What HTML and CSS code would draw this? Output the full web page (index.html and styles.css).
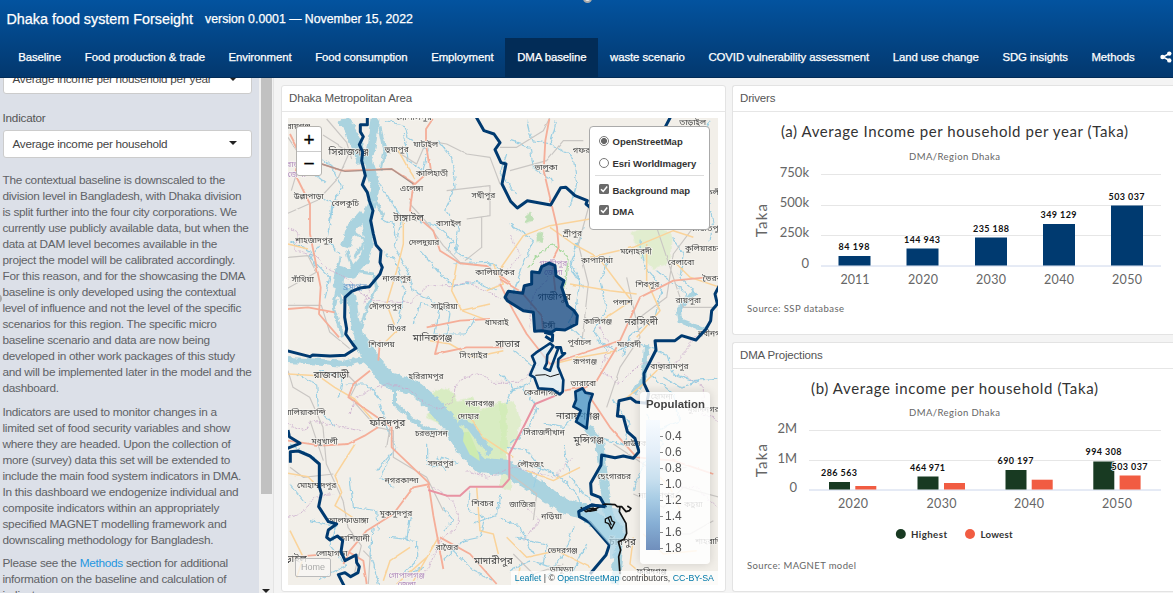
FILE: index.html
```html
<!DOCTYPE html>
<html lang="en">
<head>
<meta charset="utf-8">
<title>Dhaka food system Forseight</title>
<link rel="stylesheet" href="styles.css">
</head>
<body>
<header class="navbar">
  <span class="grip grip-top"></span>
  <div class="brand"><span class="brand-title">Dhaka food system Forseight</span><span class="brand-version">version 0.0001 — November 15, 2022</span></div>
  <nav class="tabs">
    <a>Baseline</a><a>Food production &amp; trade</a><a>Environment</a><a>Food consumption</a><a>Employment</a><a class="active">DMA baseline</a><a>waste scenario</a><a>COVID vulnerability assessment</a><a>Land use change</a><a>SDG insights</a><a>Methods</a>
    <svg class="share" viewBox="0 0 12 12"><path d="M9.500 2.500L3 6l6.500 3.500" fill="none" stroke="#fff" stroke-width="1.500"/><circle cx="9.300" cy="2.600" r="2.200"/><circle cx="2.500" cy="6" r="2.200"/><circle cx="9.300" cy="9.400" r="2.200"/></svg>
  </nav>
</header>
<div class="page">
  <aside class="sidebar">
    <span class="grip grip-left"></span>
    <div class="select select-cut"><span>Average income per household per year</span><i class="caret"></i></div>
    <div class="field-label">Indicator</div>
    <div class="select"><span>Average income per household</span><i class="caret"></i></div>
    <p class="first">The contextual baseline is downscaled to the<br>division level in Bangladesh, with Dhaka division<br>is split further into the four city corporations. We<br>currently use publicly available data, but when the<br>data at DAM level becomes available in the<br>project the model will be calibrated accordingly.<br>For this reason, and for the showcasing the DMA<br>baseline is only developed using the contextual<br>level of influence and not the level of the specific<br>scenarios for this region. The specific micro<br>baseline scenario and data are now being<br>developed in other work packages of this study<br>and will be implemented later in the model and the<br>dashboard.</p>
    <p>Indicators are used to monitor changes in a<br>limited set of food security variables and show<br>where they are headed. Upon the collection of<br>more (survey) data this set will be extended to<br>include the main food system indicators in DMA.<br>In this dashboard we endogenize individual and<br>composite indicators within an appropriately<br>specified MAGNET modelling framework and<br>downscaling methodology for Bangladesh.</p>
    <p>Please see the <a class="link">Methods</a> section for additional<br>information on the baseline and calculation of<br>indicators.</p>
  </aside>
  <div class="scrollbar"><div class="thumb"></div><i class="caret"></i></div>
  <main class="main">
    <section class="card map-card">
      <h2>Dhaka Metropolitan Area</h2>
      <div class="map">
        <svg class="tiles" viewBox="24 102 1290 1401" preserveAspectRatio="none">
          <defs>
            <filter id="wiggle" x="-5%" y="-5%" width="110%" height="110%"><feTurbulence type="fractalNoise" baseFrequency="0.055" numOctaves="3" seed="4"/><feDisplacementMap in="SourceGraphic" scale="16" xChannelSelector="R" yChannelSelector="G"/></filter>
            <filter id="bend" x="-5%" y="-5%" width="110%" height="110%"><feTurbulence type="fractalNoise" baseFrequency="0.03" numOctaves="2" seed="9"/><feDisplacementMap in="SourceGraphic" scale="6" xChannelSelector="R" yChannelSelector="G"/></filter>
          </defs>
          <rect x="0" y="80" width="1340" height="1450" fill="#f2efe9"/>
          <!-- vegetation -->
          <g fill="#cdebb0" filter="url(#wiggle)">
            <path d="M480 910l35 10 15 30 50-10 20 40 60-25 20 5v180l-60-10-50-50-70-50-60-30 40-50-30-20z" opacity=".7"/>
            <path d="M660 960l40-10 20 60-10 60-50 40zM660 1140l40 30-5 50-35-10z" opacity=".5"/>
            <path d="M1055 445l60-20 60 20-5 90-50 20-40-40z" opacity=".45"/>
            <path d="M735 400l20-15 4 25-20 8zM770 450l20-6-5 30-15 2z" fill="#a9d9a0" opacity=".7"/>
          </g>
          <path d="M745 550l30-40 45-30 45 40-10 90" fill="none" stroke="#a9d9a0" stroke-width="4" filter="url(#wiggle)"/>
          <!-- major rivers -->
          <g fill="none" stroke="#aad3df" filter="url(#wiggle)" stroke-linejoin="round">
            <path d="M190 105L215 150L235 195L245 240" stroke-width="34"/>
            <path d="M285 105L275 180L262 230L285 300L280 350" stroke-width="27"/>
            <path d="M250 390L215 430L195 490M280 350L258 410L268 480L250 530L215 570L180 560L172 600L215 640L225 720L250 800" stroke-width="28"/>
            <path d="M300 130l15 70-12 60M200 500l20 60 60 10 10 40-30 60-20 70M180 520l-15 60 20 80M205 430l50 40-30 50M290 350l20 50M175 600l-15 70 30 90" stroke-width="9"/>
            <path d="M24 828L120 833L190 840L250 825L300 870" stroke-width="18"/>
            <path d="M235 760L262 810L320 885L400 910L460 960L510 1020L550 1090L605 1145L680 1150L770 1210L850 1265L920 1285L1000 1360" stroke-width="46"/>
            <path d="M535 1010l35 15 60 80" stroke-width="24"/>
            <path d="M345 900L345 960L400 1010L450 1040L510 1045" stroke-width="12"/>
            <path d="M920 1030L960 1080L970 1180L985 1290L1020 1350L1005 1500" stroke-width="27"/>
            <path d="M1100 780L1092 880L1060 930M1245 620L1195 680L1200 710L1280 740" stroke-width="15"/>
          </g>
          <path d="M552 1045l15-2 30 70 2 18-30-20-20-40z" fill="#cdebb0"/>
          <!-- streams -->
          <g fill="none" stroke="#9bcfe3" stroke-width="3.500" filter="url(#wiggle)">
            <path d="M60 150l35 40-20 60 60 45M90 210l60 30 35 70-30 55-10 80M110 330l50 30-20 110 40 40M120 480l-30 40 60 60-15 60M30 470l60 30 20 55"/>
            <path d="M315 110l60 15 10 40 60 30-20 80M370 150l15 80 60 40M300 300l40 65 25 40-20 85 35 65 20 65 60 35 50 30-10 70M300 400l40 20 5 40M315 510l30 15 30 100-20 90"/>
            <path d="M475 170l40 50 10 90-30 65 40 60-10 70 50 25M410 410l60 15 50 45-20 30M420 500l60 70 40 35 70-10 60 25M400 720l20-60 60 10-15 80 90 0 30-50M520 540l100-5 60 30"/>
            <path d="M740 110l15 60 60 10M830 110l-20 70 70 40 10 80-20 70M690 170l60 20 10 60 60 40M680 210l-20 60 50 60M890 480l-20 70 40 60M690 420l70 50-30 70-30 90M910 430l-20 60M870 530l30 60-10 70-25 60 50 50"/>
            <path d="M1080 470l15 80 50 60-20 90-70 50-30 70M990 520l-30 70 20 90-40 60 40 60M1130 560l90 70-20 60M1290 110l-30 70 30 60M1280 330l20 90-10 50M1175 460l35 50-10 70 50 50"/>
            <path d="M950 770l60 30 60-20 90 30 20 60 60 20 100-10M1110 870l70 60 20 80-90 40M1000 950l50 70-20 60-90-20M1100 990l50 90-60 60-30 80M1150 880l50 30 60-20"/>
            <path d="M700 800l60 50-10 50-60 20M730 910l40 60-20 60-60 50M660 870l40 40-20 50M790 1020l60 10 30-30M680 1090l60 10 40 50-20 60M720 1130l110 40 60 60 30 70M850 1080l20 100 60 70"/>
            <path d="M50 870l60 30 5 70 50 60M120 860l70 20-15 60M200 900l60 0 40 45M300 960l20 70 30 60-60 70M330 1120l-30 60 40 30M210 1180l10 90 70 10 5 60M330 1360l80 10 0 60-40 40"/>
            <path d="M440 1080l0 60 30 10 15-30 50 20M470 1120l25 40M570 1220l-5 60 50 20-15 60-50 10-60 60M490 1270l30 40-30 30M430 1450l-60 20M520 1400l60 60 60 30M580 1320l70-30 10-60M30 1200l50 60M90 1310l80 15-20 60 50 60-80 40"/>
            <path d="M280 1330l-10 80 25 90M30 1080l80 50M390 1300l-10 70M660 1300l60 30 40 80M710 1360l90 20-10 60M760 1430l80 30M880 1330l-30 80-50 70M920 1380l-60 120M690 1460l60-30"/>
          </g>
          <!-- administrative borders -->
          <g fill="none" stroke="#c9a9cc" stroke-width="3" stroke-dasharray="8 3" opacity=".75" filter="url(#wiggle)">
            <path d="M24 430l30 20-10 50 60 15 40 40 60 30 60 60 80 10 50 0 50-50 70 0 50-10 100 50M300 500l5 60-35 50-20 50"/>
            <path d="M210 990l15-45 40-25 60-20 60 15 60 50 40 10 30-20 15-60 60-30 50 30 80 0 60-60"/>
            <path d="M24 1020l50 20 20-30 90 20 60 10M24 1300l40-10 40-50 60-10M460 1210l60 40 20 70-60 50-40 90-40 40M560 1160l60 20 80-30 120 30 60-60"/>
            <path d="M690 450l30 60-70 100M820 560l-60 70-10 100M960 730l30 60-30 70 60 40 60-60 110 0 60-90M1210 870l60 40 0 80 50 20M1180 1210l70 0 60 60M720 1250l60 60-50 60"/>
          </g>
          <!-- rail and minor roads -->
          <g fill="none" stroke="#c9c6c3" stroke-width="3.500" stroke-linejoin="round" filter="url(#bend)">
            <path d="M24 388l90-40 60-65 35-80-80-50M140 105l60 70 15 50M24 160l40 60-30 100M330 190l80 50 30-70 60 10 60 30 70 10 30 80M500 320l130-15 0 90-70 10M605 400l0 90-50 40M24 520l60-5 25 50-90 50"/>
            <path d="M24 664h100l25 80 60 50M400 320l-10 40 50 55 50 70 50 50 65 10M660 190l50 0 80-50 20-40M690 260l110-30 50-60 60 0M945 300l-50 180 30 120-20 180M1130 430l50 150 30 90 100 0M1240 430l-60 80-20 130-80 60M1040 580l40 180-60 90-40 120"/>
            <path d="M24 860l15 50 50 30 40 90 10 110 50 110 15 80 40 55-20 80M200 870l30 30-20 40 80 90 50 10 0 80 100 60 50 100M330 1030l-10 60M250 1400l20 20-5 80M90 1010l40 120M30 1150l40 30 90-10M690 1170l80 60-10 80M1000 1080l120 80 100-10M1060 1230l90 40 60-60 110 30M1150 1350l80 0 70-40M700 1410l60 60 90-30"/>
          </g>
          <!-- secondary roads -->
          <g fill="none" stroke="#fad39a" stroke-width="4.500" stroke-linejoin="round" filter="url(#bend)">
            <path d="M350 190l30 55 25 40M370 410l0 70-20 80-30 100 30 80-40 40M24 480l60 15M530 540l-15 80 30 60 80 30M540 680l90-20M640 540l30 60-50 20"/>
            <path d="M660 555l70-100 80-30 120-20 60-70M810 430l70 50 75 40 60 80 40 50-90 60M870 600l120 20 80 10M930 520l130-30 120-50 60 20M1100 480l0 110 40 90-70 80M1180 530l50 50 90 30"/>
            <path d="M390 1390l-60 40-20 60M24 1168l60 10 30 30M225 1080l-60 95 20 50-20 40 60 40M24 870l90 5 50 35 60 35 60 70M570 1000l40 60 90 60M450 770l60 10 70 40 90-20M440 1420l-90 80M590 1210l10 130 40 10 15 60M475 1360l-80 140M680 1360l60 60 90-20 100 50M740 1160l80 30 80-40M820 840l80-20 110-20M720 1450l-10 50M30 1340l40 80-20 60"/>
            <path d="M1150 840l-60 60-60 50M1110 1150l60 60 30 70M1090 1350l60 60 100-10M1060 1360l-10 80 60 50"/>
          </g>
          <!-- primary roads -->
          <g fill="none" stroke="#f5ae99" stroke-width="5.500" stroke-linejoin="round" filter="url(#bend)">
            <path d="M30 150l30 60-15 60 45 90 0 90 12 60 20 100-5 80 60 70M24 675l60-5 80 15M125 240l60 20 150-5 70 45 45-40-12-80 0-45 20-30M400 300l-10 80 70 60 20 60 60 38 80 8 70 50"/>
            <path d="M808 105l-12 65-5 90 40 170 5 60-20 40 10 90M790 745l-5-50-60-70-65-40M660 600l40 80 40 70 70 90 90-30 120-40 60-130 100-50 100-10 70-5"/>
            <path d="M270 860l-50 40-15 40 130 90 0 60 110 105 15 100 30 160M24 1070l100 15 80-5 50-25 40-25M450 1200l-50 10-60 80-80 50-50 60-20 40M200 1400l50 30 10 70M480 1360l90 50 80 90M480 750l-15 60 95-20 110 0M1010 790l-60 100-40 20-60 10 M910 910l80 120 80 90 110 10 120 40M24 1420l100-8M440 730l100-20 90-5M300 770l-5 60"/>
          </g>
          <path d="M445 1218L500 1235L540 1235L570 1208L668 1208L688 1185V1110L730 1030L765 960L850 925" fill="none" stroke="#e892a2" stroke-width="6" stroke-linejoin="round"/>
          <path d="M125 240l70 22 140-7 65 45" fill="none" stroke="#ad928b" stroke-width="4"/>
          <!-- place names -->
          <g class="places">
            <text x="56" y="136">রায়গঞ্জ</text><text x="206" y="212" class="lg">সিরাজগঞ্জ</text><text x="350" y="203">ভূয়াপুর</text><text x="437" y="190">ঘাটাইল</text><text x="402" y="108">গোপালপুর</text><text x="456" y="276">কালিহাতী</text><text x="395" y="322">এলেঙ্গা</text><text x="610" y="342">সখীপুর</text><text x="86" y="346">উল্লাপাড়া</text><text x="196" y="365">বেলকুচি</text><text x="386" y="410" class="lg">টাঙ্গাইল</text><text x="506" y="427">বাসাইল</text><text x="102" y="476">শাহজাদপুর</text><text x="432" y="482">দেলদুয়ার</text><text x="350" y="592">নাগরপুর</text><text x="68" y="594">সাঁথিয়া</text><text x="645" y="574">কালিয়াকৈর</text><text x="316" y="676">দৌলতপুর</text><text x="493" y="674">সাটুরিয়া</text><text x="350" y="741">ঘিওর</text><text x="650" y="724">ধামরাই</text><text x="458" y="772" class="lg">মানিকগঞ্জ</text><text x="305" y="790">শিবালয়</text>
            <text x="225" y="616" class="water">ব্রহ্মপুত্র</text><text x="62" y="250" class="region">রাজশাহী</text><text x="50" y="278" class="region">জেলা</text>
            <text x="798" y="257">ভালুকা</text><text x="1238" y="122">তাড়াইল</text><text x="925" y="208">গফরগাঁও</text><text x="877" y="457">শ্রীপুর</text><text x="1068" y="510">মনোহরদী</text><text x="951" y="537">কাপাসিয়া</text><text x="1270" y="502">কুলিয়ারচর</text><text x="1203" y="543">বেলাবো</text><text x="1102" y="608">শিবপুর</text><text x="1225" y="656">রায়পুরা</text><text x="1028" y="663">পলাশ</text><text x="953" y="720">কালিগঞ্জ</text><text x="1084" y="724" class="lg">নরসিংদী</text><text x="1295" y="755">নবীনগর</text><text x="1290" y="332">নিকলী</text><text x="1280" y="442">বাজিতপুর</text><text x="1296" y="592">ভৈরব</text>
            <text x="820" y="545" class="region">গাজীপুর</text><text x="820" y="572" class="region">জেলা</text>
            <text x="154" y="883" class="lg">রাজবাড়ী</text><text x="438" y="885">হরিরামপুর</text><text x="580" y="823">সিংগাইর</text><text x="75" y="992">বালিয়াকান্দি</text><text x="322" y="1025" class="lg">ফরিদপুর</text><text x="600" y="965">নবাবগঞ্জ</text><text x="565" y="1006">দোহার</text><text x="454" y="1057">চরভদ্রাসন</text><text x="134" y="1080">মধুখালী</text><text x="482" y="1147">সদরপুর</text><text x="365" y="1197">নগরকান্দা</text><text x="110" y="1213">মোহাম্মদপুর</text><text x="608" y="1266">শিবচর</text><text x="348" y="1295">মুকসুদপুর</text><text x="205" y="1316">আলফাডাঙ্গা</text><text x="222" y="1372">কাশিয়ানী</text><text x="155" y="1416">লোহাগড়া</text><text x="501" y="1398">রাজৈর</text><text x="640" y="1440" class="lg">মাদারীপুর</text><text x="38" y="1433" class="lg">নড়াইল</text><text x="380" y="1482" class="region">গোপালগঞ্জ</text><text x="380" y="1508" class="region">জেলা</text>
            <text x="683" y="790" class="lg">সাভার</text><text x="898" y="783">পূর্বাচল</text><text x="1047" y="788">মাধবদী</text><text x="915" y="840">রূপগঞ্জ</text><text x="910" y="905">তারাবো</text><text x="785" y="932">কেরানীগঞ্জ</text><text x="894" y="1004" class="lg">নারায়ণগঞ্জ</text><text x="926" y="1078" class="lg">মুন্সিগঞ্জ</text><text x="792" y="1052">সিরাজদীখান</text><text x="752" y="1150">লৌহজং</text><text x="1168" y="855">বাঞ্ছারামপুর</text><text x="1145" y="946">হোমনা</text><text x="1270" y="985">মুরাদনগর</text><text x="1084" y="1086">দাউদকান্দি</text><text x="1002" y="1184">ছেংগারচর</text><text x="727" y="1270">জাজিরা</text><text x="815" y="1306">নড়িয়া</text><text x="1130" y="1242">নারায়ণপুর</text><text x="1240" y="1268">কচুয়া</text><text x="1028" y="1382" class="lg">চাঁদপুর</text><text x="848" y="1408">ভেদরগঞ্জ</text><text x="845" y="1463">ডামুড্যা</text><text x="1288" y="1380">শাহরাস্তি</text><text x="1115" y="1470">ফরিদগঞ্জ</text>
          </g>
          <!-- DMA layer -->
          <g class="plain-places"><text x="823" y="648" class="lg">গাজীপুর</text><text x="807" y="731">টঙ্গী</text></g>
          <g fill="none" stroke="#003a70" stroke-width="9" stroke-linejoin="round">
            <path d="M262 98V122H241V143L250 158L238 182L248 204L245 230L256 275L247 302L262 325L268 350L279 380L272 410L280 450L288 483L303 500L300 535L307 550L300 570L268 608L240 612L215 622L195 640L194 700L200 735L197 750L218 780L228 793L195 814L150 816L98 813L90 818L20 800"/>
            <path d="M24 1038L28 1058L60 1078L22 1093M31 1136V1103L55 1101L90 1116L118 1140V1208L124 1228L116 1268L145 1313L170 1320L145 1338L140 1360L150 1368L172 1356L188 1370L183 1403L195 1430L228 1413L230 1436L238 1448L234 1466L212 1478L195 1466L175 1472L192 1505"/>
            <path d="M588 98L612 140L642 150L660 176L645 197L663 236L678 240L666 300L692 352L712 372L742 350L812 363L842 311L858 310L885 335L922 350L918 360L940 378M1172 98L1150 140"/>
            <path d="M1318 605L1305 630L1312 660L1295 680L1292 710L1278 735L1248 768L1205 755L1185 770H1125L1128 798L1092 868V898L1106 928L1100 958L1068 954L1052 942L1017 950L1012 996L1030 998L1042 1043L1065 1063L1077 1103L1060 1123L1030 1116L1005 1121L965 1113L963 1143L932 1198L934 1230L960 1240L976 1268L935 1263L896 1283L898 1298L930 1316L988 1383L978 1413L930 1470"/>
            <path fill="#003a7a" fill-opacity=".7" d="M755 563L778 566L785 548L808 537L825 545L828 575L852 590L845 610L863 665L882 680L892 695L890 720L855 738L828 736L815 745L785 740L764 742L760 685L730 680L682 650L675 640L685 622L728 628L733 605L755 600Z"/>
            <path d="M793 745L818 752L817 771L796 757"/>
            <path fill="#dcecf6" fill-opacity=".6" stroke-width="8" d="M756 816L768 806L798 786L810 778L820 786L802 813L800 838L793 853L810 860L818 838L835 793L828 790L842 790L846 808L855 808L835 826L834 848L850 888L848 923L840 931L818 916L775 913L763 880L750 873L765 838Z"/>
            <path stroke="#111" stroke-width="3" d="M766 874l30-2 15 6 27-8"/>
            <path fill="#4292c6" fill-opacity=".75" stroke-width="8" d="M908 913L916 926L938 930L928 958L920 1033L888 1013L902 980L880 968L888 948L886 923Z"/>
            <path fill="#abd5e8" fill-opacity=".7" stroke="none" d="M898 1283L976 1268L1018 1275L1038 1318L1040 1348L1032 1366L1015 1373L1018 1420L990 1425V1383L930 1316Z"/>
            <path stroke="#111" stroke-width="5" d="M902 1270L918 1283L950 1273L976 1260L1005 1262L1012 1268L1025 1268L1038 1283L1048 1280L1053 1273L1042 1266M1020 1268L1018 1283L1038 1318L1040 1348L1032 1366L1015 1373L1022 1398L1016 1418L1020 1470"/>
            <path stroke="#111" stroke-width="4" d="M920 1276l20-4 10 6-20 4zM976 1305l16-8 4 14 8 4-10 20-8-16-10-4zM984 1300l10 24"/>
            <path d="M896 1283L935 1263L976 1268"/>
          </g>
        </svg>
        <div class="zoom-control"><span>+</span><span>−</span></div>
        <div class="layers">
          <label><i class="radio on"></i>OpenStreetMap</label>
          <label><i class="radio"></i>Esri WorldImagery</label>
          <hr>
          <label><svg class="check" viewBox="0 0 10 10"><rect width="10" height="10" rx="1.500"/><path d="M2 5.200L4.200 7.400L8.200 2.600"/></svg>Background map</label>
          <label><svg class="check" viewBox="0 0 10 10"><rect width="10" height="10" rx="1.500"/><path d="M2 5.200L4.200 7.400L8.200 2.600"/></svg>DMA</label>
        </div>
        <div class="legend">
          <strong>Population</strong>
          <div class="scale"><div class="ramp"></div><div class="ticks"><span>0.4</span><span>0.6</span><span>0.8</span><span>1.0</span><span>1.2</span><span>1.4</span><span>1.6</span><span>1.8</span></div></div>
        </div>
        <div class="home">Home</div>
        <div class="attribution"><a>Leaflet</a> | © <a>OpenStreetMap</a> contributors, <a>CC-BY-SA</a></div>
      </div>
    </section>
    <div class="charts">
      <section class="card chart-card">
        <h2>Drivers</h2>
        <svg class="chart" viewBox="733 112 440 222">
          <text class="title" x="781" y="137" textLength="347">(a) Average Income per household per year (Taka)</text>
          <text class="sub" x="909" y="159.500" textLength="91">DMA/Region Dhaka</text>
          <path class="grid" d="M821 174.500H1161M821 205.500H1161M821 235.500H1161"/><path class="axis" d="M821 266H1161"/>
          <g class="ylab"><text x="809" y="176.500">750k</text><text x="809" y="207">500k</text><text x="809" y="237">250k</text><text x="809" y="267.500">0</text></g>
          <text class="unit" transform="translate(766.500 220) rotate(-90)">Taka</text>
          <g fill="#003a70"><rect x="838.500" y="256" width="32" height="9.500"/><rect x="906.500" y="248.500" width="32" height="17"/><rect x="975" y="237.500" width="32" height="28"/><rect x="1043" y="224" width="32" height="41.500"/><rect x="1111" y="205.500" width="32" height="60"/></g>
          <g class="val"><text x="854" y="249.500" textLength="31">84 198</text><text x="922" y="242.500" textLength="36">144 943</text><text x="991" y="231.500" textLength="36">235 188</text><text x="1058.500" y="217.500" textLength="36">349 129</text><text x="1126.500" y="199.500" textLength="36">503 037</text></g>
          <g class="xlab"><text x="855" y="283.500" textLength="29">2011</text><text x="923" y="283.500" textLength="30">2020</text><text x="991" y="283.500" textLength="30">2030</text><text x="1059" y="283.500" textLength="30">2040</text><text x="1127" y="283.500" textLength="30">2050</text></g>
          <text class="sub" x="747" y="312" textLength="97">Source: SSP database</text>
        </svg>
      </section>
      <section class="card chart-card">
        <h2>DMA Projections</h2>
        <svg class="chart" viewBox="733 369 440 222">
          <text class="title" x="811" y="393.500" textLength="287">(b) Average income per household (Taka)</text>
          <text class="sub" x="909" y="416" textLength="91">DMA/Region Dhaka</text>
          <path class="grid" d="M809 430.500H1161M809 460.500H1161"/><path class="axis" d="M809 490H1161"/>
          <g class="ylab"><text x="797" y="433">2M</text><text x="797" y="462.500">1M</text><text x="797" y="492">0</text></g>
          <text class="unit" transform="translate(766.500 460) rotate(-90)">Taka</text>
          <g fill="#183a22"><rect x="829" y="482" width="21" height="7.500"/><rect x="917.500" y="476.500" width="21" height="13"/><rect x="1005.500" y="470" width="21" height="19.500"/><rect x="1093.300" y="461.500" width="21" height="28"/></g>
          <g fill="#f15c42"><rect x="855.300" y="486" width="21" height="3.500"/><rect x="944" y="483" width="21" height="6.500"/><rect x="1031.700" y="479.700" width="21" height="9.800"/><rect x="1119.600" y="475.500" width="21" height="14"/></g>
          <g class="val"><text x="839" y="476" textLength="36">286 563</text><text x="927.500" y="470.500" textLength="35">464 971</text><text x="1015.500" y="464" textLength="36">690 197</text><text x="1103.500" y="455" textLength="36">994 308</text><text x="1129.500" y="470" textLength="36">503 037</text></g>
          <g class="xlab"><text x="853" y="507.500" textLength="30">2020</text><text x="941.500" y="507.500" textLength="30">2030</text><text x="1029" y="507.500" textLength="30">2040</text><text x="1117" y="507.500" textLength="30">2050</text></g>
          <circle cx="900.800" cy="534" r="5" fill="#183a22"/><circle cx="970" cy="534" r="5" fill="#f15c42"/>
          <g class="key"><text x="911" y="538" textLength="36">Highest</text><text x="980.500" y="538" textLength="32">Lowest</text></g>
          <text class="sub" x="747" y="568.500" textLength="109">Source: MAGNET model</text>
        </svg>
      </section>
    </div>
  </main>
</div>
</body>
</html>
```
FILE: styles.css
```css
* { box-sizing: border-box; }
body { margin: 0; width: 1173px; height: 593px; overflow: hidden; background: #f2f2f2; font-family: "Liberation Sans", Arial, sans-serif; font-size: 11.2px; color: #555; }
.navbar { position: relative; height: 78px; background: linear-gradient(#03539f, #03386e); border-bottom: 1px solid #022c57; color: #fff; display: flex; flex-direction: column; }
.brand { height: 37px; display: flex; align-items: center; padding-left: 6.5px; gap: 12px; -webkit-text-stroke: .25px #fff; }
.brand-title { font-size: 14.35px; white-space: nowrap; }
.brand-version { font-size: 12.3px; white-space: nowrap; }
.tabs { height: 39px; margin-top: 1px; padding-left: 6.3px; display: flex; align-items: stretch; letter-spacing: -.09px; font-size: 11.4px; -webkit-text-stroke: .25px #fff; }
.tabs a { flex: none; padding: 0 11.83px; line-height: 38px; white-space: nowrap; }
.tabs .active { background: #022c57; }
.share { flex: none; width: 12px; height: 12px; margin: 13px 0 0 13.5px; fill: #fff; }
.grip { position: absolute; width: 9px; height: 9px; border-radius: 50%; border: 2px solid #aaa; background: #eee; }
.grip-top { left: 583px; top: -6px; }
.grip-left { left: -7px; top: 216px; background: transparent; }
.page { display: flex; height: 515px; }
.sidebar { position: relative; flex: none; width: 259px; padding: 0 7px 0 2.5px; background: #dce0e8; overflow: hidden; }
.select { height: 28px; width: 249px; padding: 0 14px 2px 9px; border: 1px solid #ccc; border-radius: 3px; background: #fff; display: flex; align-items: center; justify-content: space-between; color: #444; font-size: 11.7px; letter-spacing: -.24px; }
.select-cut { margin-top: -12px; padding-bottom: 3px; }
.caret { border: 4px solid transparent; border-top-color: #222; border-bottom: 0; }
.field-label { height: 36px; padding-top: 17px; line-height: 14px; font-size: 11.7px; letter-spacing: -.2px; }
.sidebar p { margin: 0 0 8px; line-height: 16px; white-space: nowrap; letter-spacing: -.28px; color: #606266; font-size: 11.8px; }
.sidebar p.first { margin-top: 14px; }
.sidebar p:last-child { margin-top: -1px; }
.link { color: #1e96e0; }
.scrollbar { flex: none; width: 15px; padding: 0 2px; background: #f1f1f1; border-right: 1px solid #e4e4e4; display: flex; flex-direction: column; justify-content: space-between; align-items: center; }
.scrollbar .thumb { width: 11px; height: 416px; background: #c1c1c1; }
.main { flex: 1; min-width: 0; display: grid; grid-template-columns: 445px 442px; gap: 6px; padding: 7px 0 0 7px; background: #f4f4f4; }
.card { background: #fff; border: 1px solid #e3e3e3; border-radius: 3px; overflow: hidden; }
.card h2 { margin: 0; height: 26px; padding-left: 7px; line-height: 25px; border-bottom: 1px solid #e6e6e6; font-size: 11.5px; letter-spacing: -.16px; font-weight: 400; color: #555; }
.map-card { height: 507px; }
.charts { display: flex; flex-direction: column; gap: 7px; }
.chart-card { height: 250px; border-right: 0; border-radius: 3px 0 0 3px; }
.map { position: relative; width: 430px; height: 467px; margin: 6px 0 0 6px; overflow: hidden; }
.tiles { display: block; width: 430px; height: 467px; }
.places text, .plain-places text { font-family: "Noto Sans Bengali", "Noto Sans", sans-serif; font-size: 25px; fill: #444; text-anchor: middle; }
.places text { stroke: #f7f5f0; stroke-width: 4px; paint-order: stroke; }
.places .lg, .plain-places .lg { font-size: 30px; }
.places .region { fill: #b08bbd; }
.places .water { fill: #6699cc; stroke: none; }
.zoom-control { position: absolute; left: 8px; top: 8px; width: 26px; height: 50px; border: 1px solid #b5b3af; border-radius: 3px; background: #fff; color: #000; display: flex; flex-direction: column; }
.zoom-control span { height: 24px; line-height: 26px; text-align: center; font-size: 19px; -webkit-text-stroke: .3px #000; }
.zoom-control span + span { line-height: 23px; border-top: 1px solid #ccc; }
.layers { position: absolute; left: 301px; top: 8px; width: 121px; height: 104px; padding: 4px 5px 4px 9px; border: 1px solid #aaa; border-radius: 4px; background: #fff; color: #333; font: bold 9.500px "Liberation Sans", Arial, sans-serif; }
.layers label { display: flex; align-items: center; gap: 3.5px; height: 21.700px; white-space: nowrap; }
.layers hr { margin: 1px 0 3px -4px; border: 0; border-top: 1px solid #ddd; }
.radio { width: 10px; height: 10px; margin-top: -1px; border: 1px solid #777; border-radius: 50%; }
.radio.on { background: radial-gradient(circle, #666 0 2.700px, #fff 3.300px); }
.check { width: 10px; height: 10px; margin-top: -3px; fill: #6b6b6b; }
.check path { fill: none; stroke: #fff; stroke-width: 1.500; }
.legend { position: absolute; left: 352px; top: 274px; width: 70px; height: 172px; padding: 6px 6px; border-radius: 4px; background: rgba(255,255,255,.84); box-shadow: 0 0 10px rgba(0,0,0,.14); }
.legend strong { display: block; height: 22px; line-height: 13px; font-size: 11.4px; color: #444; }
.scale { display: flex; }
.ramp { width: 14px; height: 130px; background: linear-gradient(#f7fbff, #e3eef8 25%, #c9e0ef 45%, #a9cde5 60%, #86aed4 80%, #708fbc); }
.ticks { padding-top: 8px; color: #555; font-size: 12px; }
.ticks span { display: flex; align-items: center; height: 16px; gap: 2px; }
.ticks span::before { content: ""; width: 3px; height: 1px; background: #888; }
.home { position: absolute; left: 7px; top: 440px; width: 36px; height: 19px; border: 1px solid #bbb; border-radius: 2px; background: rgba(248,247,244,.75); color: #aaa; text-align: center; line-height: 17px; font-size: 9px; }
.attribution { position: absolute; right: 0; bottom: 0; height: 14px; padding: 0 4px; background: rgba(255,255,255,.72); line-height: 14px; font-size: 8.800px; white-space: nowrap; color: #444; }
.attribution a { color: #0078a8; }
.chart { display: block; width: 440px; height: 222px; }
.chart text { font-family: Lato, "Noto Sans", sans-serif; }
.chart .title { font-size: 15px; fill: #333; }
.chart .sub { font-size: 9.500px; fill: #666; }
.chart .ylab text { font-size: 13px; fill: #666; text-anchor: end; }
.chart .xlab { font-size: 12.500px; fill: #666; text-anchor: middle; }
.chart .unit { font-size: 15px; letter-spacing: 1.2px; fill: #666; text-anchor: middle; }
.chart .val { font-size: 9px; font-weight: 700; fill: #111; text-anchor: middle; }
.chart .val text { paint-order: stroke; stroke: #fff; stroke-width: 1.500px; }
.chart .key { font-size: 9.700px; font-weight: 700; fill: #333; }
.grid { stroke: #e6e6e6; fill: none; }
.axis { stroke: #ccd6eb; fill: none; }
```
